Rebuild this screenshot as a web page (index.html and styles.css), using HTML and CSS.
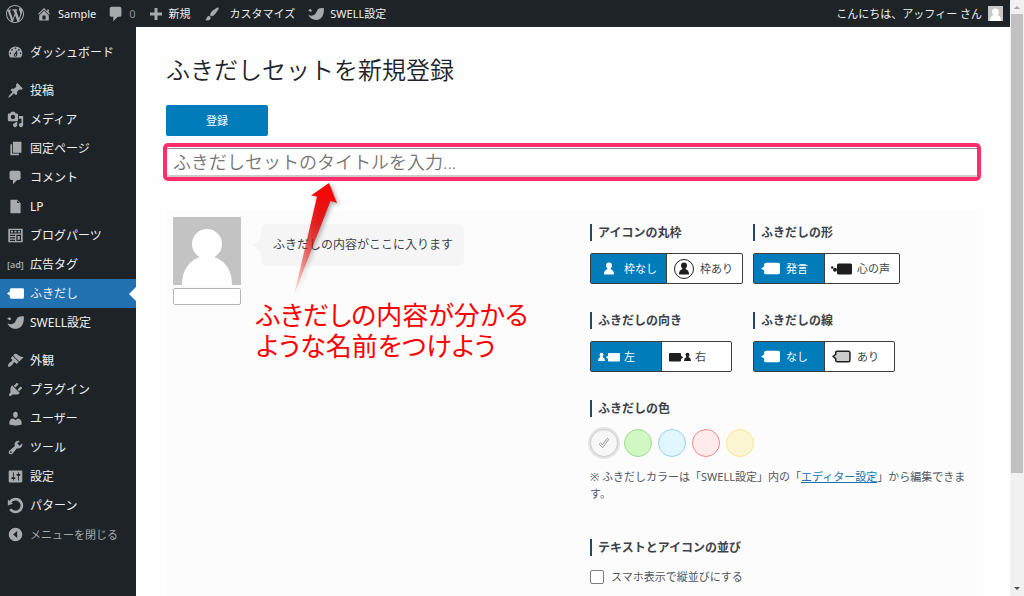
FILE: index.html
```html
<!DOCTYPE html>
<html lang="ja">
<head>
<meta charset="utf-8">
<title>ふきだしセットを新規登録</title>
<link rel="stylesheet" href="styles.css">
</head>
<body>
<svg class="defs" aria-hidden="true">
  <symbol id="i-comment" viewBox="0 0 20 20"><path d="M5 2h9c1.1 0 2 .9 2 2v7c0 1.1-.9 2-2 2h-2l-5 5v-5H5c-1.1 0-2-.9-2-2V4c0-1.1.9-2 2-2z"/></symbol>
  <symbol id="i-bird" viewBox="0 0 20 20"><path d="M0 5.500L2.600 3.800Q4.600 4 4.700 5.800 4.500 7.400 3 7.300 2 6.500 0 5.500zM.6 10.800Q4.800 13.400 8.300 10.700C11 8.500 11 3.500 15 2.800Q17.500 2.500 19.800 2.600C20.300 10 17.800 17.300 10.500 17.400 5.500 17.300 2 14.800.6 10.800z"/></symbol>
  <symbol id="i-user" viewBox="0 0 20 20"><path d="M10 9.250c-2.270 0-2.730-3.440-2.730-3.440C7 4.020 7.820 2 9.970 2c2.160 0 2.980 2.020 2.710 3.810 0 0-.41 3.440-2.680 3.440zm0 2.570L12.720 10c2.390 0 4.520 2.330 4.520 4.530v2.490s-3.650 1.130-7.240 1.130c-3.650 0-7.240-1.130-7.240-1.130v-2.490c0-2.250 1.940-4.480 4.470-4.480z"/></symbol>
  <symbol id="i-person" viewBox="0 0 10 12"><circle cx="5" cy="3" r="3"/><path d="M3.500 5h3l.3 1.700C9 7.400 10 9 10 12H0c0-3 1-4.600 3.200-5.300z"/></symbol>
  <symbol id="i-balloon" viewBox="0 0 18 12"><path d="M5 .5h11.500Q18 .5 18 2v8q0 1.500-1.500 1.500H4.500Q3 11.500 3 10V8L0 6l3-2V2Q3 .5 5 .5z"/></symbol>
  <symbol id="i-think" viewBox="0 0 21 12"><rect x="6" y=".5" width="15" height="11" rx="1.500"/><circle cx="4" cy="6.800" r="2"/><circle cx="1.200" cy="4.500" r="1.200"/></symbol>
  <symbol id="i-outline" viewBox="0 0 18 12"><path d="M5 1h10.500Q17 1 17 2.500v7Q17 11 15.500 11H5Q3.500 11 3.500 9.500V8L1 6l2.500-2V2.500Q3.500 1 5 1z" fill="#ccc" stroke="#1e1e1e" stroke-width="1.400"/></symbol>
  <symbol id="i-left" viewBox="0 0 22 10"><circle cx="3.500" cy="2.700" r="2"/><path d="M2.500 4h2l.3 1.200Q7 6 7 9H0q0-3 2.200-3.800zM11 1h10q1 0 1 1v6.500q0 1-1 1H11q-1 0-1-1V7L7.800 5.300 10 3.700V2q0-1 1-1z"/></symbol>
</svg>

<header class="topbar">
  <a class="tb tb-mark" href="#" aria-label="WordPress"><svg class="ic18" viewBox="0 0 20 20"><path d="M20 10c0-5.510-4.490-10-10-10C4.480 0 0 4.490 0 10c0 5.520 4.480 10 10 10 5.510 0 10-4.480 10-10zM7.780 15.370L4.370 6.220c.55-.02 1.170-.08 1.170-.08.5-.06.44-1.130-.06-1.110 0 0-1.450.11-2.370.11-.18 0-.37 0-.58-.01C4.120 2.690 6.870 1.110 10 1.110c2.330 0 4.450.87 6.050 2.340-.68-.11-1.650.39-1.650 1.580 0 .74.45 1.360.9 2.100.35.61.55 1.360.55 2.460 0 1.490-1.400 5-1.400 5l-3.030-8.370c.54-.02.82-.17.82-.17.5-.05.44-1.250-.06-1.220 0 0-1.440.12-2.380.12-.87 0-2.330-.12-2.330-.12-.5-.03-.56 1.200-.06 1.220l.92.08 1.260 3.410zM17.410 10c.24-.64.74-1.870.43-4.250.7 1.290 1.050 2.710 1.050 4.250 0 3.290-1.730 6.240-4.400 7.780.97-2.590 1.940-5.200 2.920-7.780zM6.100 18.090C3.120 16.650 1.110 13.530 1.110 10c0-1.300.23-2.480.72-3.590C3.250 10.300 4.670 14.200 6.100 18.090zm4.030-6.630l2.580 6.980c-.86.29-1.760.45-2.710.45-.79 0-1.570-.11-2.290-.33.81-2.380 1.620-4.740 2.420-7.100z"/></svg></a>
  <a class="tb" href="#"><svg class="ic16" viewBox="0 0 20 20"><path d="M16 8.500l1.530 1.530-1.060 1.060L10 4.600l-6.470 6.490-1.060-1.060L10 2.500l4 4v-2h2v4zm-6-2.460l6 5.990V18H4v-5.970zM12 17v-5H8v5h4z"/></svg>Sample</a>
  <a class="tb tb-dim" href="#"><svg class="ic18"><use href="#i-comment"/></svg>0</a>
  <a class="tb" href="#"><svg class="ic14" viewBox="0 0 14 14"><path d="M5.500 1h3v4.500H13v3H8.500V13h-3V8.500H1v-3h4.500z"/></svg>新規</a>
  <a class="tb tb-wide" href="#"><svg class="ic16" viewBox="0 0 20 20"><path d="M18.330 3.570s.27-.8-.31-1.360c-.53-.52-1.220-.24-1.220-.24-.61.3-5.760 3.470-7.670 5.570-.86.96-2.060 3.790-1.090 4.820.92.98 3.960-.17 4.790-1 2.060-2.060 5.210-7.170 5.500-7.790zM1.400 17.650c2.370-1.560 1.460-3.410 3.230-4.640.93-.65 2.220-.62 3.080.29.63.67.8 2.570-.16 3.460-1.570 1.450-4 1.550-6.150.89z"/></svg>カスタマイズ</a>
  <a class="tb" href="#"><svg class="ic16"><use href="#i-bird"/></svg>SWELL設定</a>
  <a class="tb account" href="#">こんにちは、アッフィー さん
    <svg class="face" viewBox="0 0 15 15"><path fill="#c7c7c7" d="M0 0h15v15H0z"/><circle cx="7.500" cy="6" r="3.400" fill="#fff"/><path fill="#fff" d="M2 15q0-5.500 4-6h3q4 .5 4 6z"/></svg>
  </a>
</header>

<nav class="sidebar" aria-label="メインメニュー">
  <ul>
    <li><a href="#"><svg viewBox="0 0 20 20"><path d="M3.760 16h12.480c1.100-1.370 1.760-3.110 1.760-5 0-4.420-3.580-8-8-8s-8 3.580-8 8c0 1.890.66 3.630 1.760 5zM10 4c.55 0 1 .45 1 1s-.45 1-1 1-1-.45-1-1 .45-1 1-1zM6 6c.55 0 1 .45 1 1s-.45 1-1 1-1-.45-1-1 .45-1 1-1zm8 0c.55 0 1 .45 1 1s-.45 1-1 1-1-.45-1-1 .45-1 1-1zm-5.370 5.550L12 7v6c0 1.100-.9 2-2 2s-2-.9-2-2c0-.57.24-1.080.63-1.450zM4 10c.55 0 1 .45 1 1s-.45 1-1 1-1-.45-1-1 .45-1 1-1zm12 0c.55 0 1 .45 1 1s-.45 1-1 1-1-.45-1-1 .45-1 1-1zm-5 3c0-.55-.45-1-1-1s-1 .45-1 1 .45 1 1 1 1-.45 1-1z"/></svg>ダッシュボード</a></li>
  </ul>
  <ul>
    <li><a href="#"><svg viewBox="0 0 20 20"><path d="M10.440 3.020l1.820-1.820 6.360 6.350-1.830 1.820c-1.050-.68-2.480-.57-3.410.36l-.75.75c-.92.93-1.040 2.350-.35 3.410l-1.830 1.820-2.410-2.410-2.800 2.790c-.42.42-3.380 2.710-3.800 2.290s1.860-3.390 2.280-3.810l2.790-2.790L4.100 9.360l1.830-1.820c1.050.69 2.480.57 3.400-.36l.75-.75c.93-.92 1.050-2.350.36-3.410z"/></svg>投稿</a></li>
    <li><a href="#"><svg viewBox="0 0 20 20"><path d="M13 11V4c0-.55-.45-1-1-1h-1.670L9 1H5L3.670 3H2c-.55 0-1 .45-1 1v7c0 .55.45 1 1 1h10c.55 0 1-.45 1-1zM7 4.500c1.380 0 2.500 1.120 2.500 2.500S8.380 9.500 7 9.500 4.500 8.380 4.500 7 5.620 4.500 7 4.500zM14 6h5v10.500c0 1.380-1.120 2.500-2.500 2.500S14 17.880 14 16.500s1.120-2.500 2.500-2.500c.17 0 .34.02.5.05V9h-3V6zm-4 8.050V13h2v3.500c0 1.380-1.120 2.500-2.500 2.500S7 17.880 7 16.500 8.120 14 9.500 14c.17 0 .34.02.5.05z"/></svg>メディア</a></li>
    <li><a href="#"><svg viewBox="0 0 20 20"><path d="M7 15V2h10v13H7zm-1 1h8v2H4V5h2v11z"/></svg>固定ページ</a></li>
    <li><a href="#"><svg><use href="#i-comment"/></svg>コメント</a></li>
    <li><a href="#"><svg viewBox="0 0 20 20"><path d="M12 2l4 4v12H4V2h8zm0 4h3l-3-3v3z"/></svg>LP</a></li>
    <li><a href="#"><svg viewBox="0 0 20 20"><path fill-rule="evenodd" d="M1.500 2h17v16h-17zM3.500 3.500v4h13v-4zM3.500 9v1.500h6V9zm7.500 0v7.500h5.500V9zm-7.500 3v1.500h6V12zm0 3v1.500h6V15zm9-4.500H15V15h-2.500zM4.500 4.500h2.500v2H4.500zm4.200 0h2.500v2H8.700zm4.300 0h2.500v2H13z"/></svg>ブログパーツ</a></li>
    <li><a href="#"><span class="ad" aria-hidden="true">[ad]</span>広告タグ</a></li>
    <li><a class="current" href="#" aria-current="page"><svg><use href="#i-balloon"/></svg>ふきだし</a></li>
    <li><a href="#"><svg><use href="#i-bird"/></svg>SWELL設定</a></li>
  </ul>
  <ul>
    <li><a href="#"><svg viewBox="0 0 20 20"><path d="M14.480 11.060L7.410 3.990l1.500-1.500c.5-.56 2.300-.47 3.510.32 1.210.8 1.430 1.280 2.910 2.100 1.180.64 2.450 1.260 4.450.85zm-.71.71L6.700 4.700 4.930 6.470c-.39.39-.39 1.020 0 1.410l1.060 1.060c.39.39.39 1.030 0 1.420-.6.6-1.430 1.110-2.210 1.690-.35.26-.7.53-1.010.84C1.430 14.230.4 16.080 1.400 17.070c.99 1 2.840-.03 4.180-1.360.31-.31.58-.66.85-1.020.57-.78 1.080-1.610 1.690-2.210.39-.39 1.020-.39 1.410 0l1.060 1.060c.39.39 1.020.39 1.410 0z"/></svg>外観</a></li>
    <li><a href="#"><svg viewBox="0 0 20 20"><path d="M13.110 4.360L9.870 7.600 8 5.730l3.240-3.240c.35-.34 1.050-.2 1.560.32.52.51.66 1.210.31 1.550zm-8 1.770l.91-1.120 9.010 9.010-1.190.84c-.71.71-2.630 1.160-3.820 1.160H6.140L4.900 17.260c-.59.59-1.540.59-2.120 0-.59-.58-.59-1.530 0-2.120l1.240-1.240v-3.880c0-1.130.4-3.190 1.090-3.890zm7.260 3.970l3.240-3.240c.34-.35 1.040-.21 1.550.31.52.51.66 1.210.31 1.550l-3.240 3.250z"/></svg>プラグイン</a></li>
    <li><a href="#"><svg><use href="#i-user"/></svg>ユーザー</a></li>
    <li><a href="#"><svg viewBox="0 0 20 20"><path d="M16.680 9.770c-1.340 1.340-3.300 1.670-4.950.99l-5.410 6.520c-.99.99-2.590.99-3.580 0s-.99-2.590 0-3.570l6.520-5.420c-.68-1.650-.35-3.610.99-4.950 1.280-1.280 3.120-1.620 4.720-1.060l-2.890 2.890 2.820 2.820 2.860-2.870c.53 1.580.18 3.390-1.080 4.650zM3.810 16.210c.4.39 1.040.39 1.430 0 .4-.4.4-1.040 0-1.430-.39-.4-1.030-.4-1.430 0-.39.39-.39 1.030 0 1.430z"/></svg>ツール</a></li>
    <li><a href="#"><svg viewBox="0 0 20 20"><path d="M18 16V4c0-.55-.45-1-1-1H3c-.55 0-1 .45-1 1v12c0 .55.45 1 1 1h14c.55 0 1-.45 1-1zM8 11h1c.55 0 1 .45 1 1s-.45 1-1 1H8v1.500c0 .28-.22.5-.5.5s-.5-.22-.5-.5V13H6c-.55 0-1-.45-1-1s.45-1 1-1h1V5.500c0-.28.22-.5.5-.5s.5.22.5.5V11zm5-2h-1c-.55 0-1-.45-1-1s.45-1 1-1h1V5.500c0-.28.22-.5.5-.5s.5.22.5.5V7h1c.55 0 1 .45 1 1s-.45 1-1 1h-1v5.500c0 .28-.22.5-.5.5s-.5-.22-.5-.5V9z"/></svg>設定</a></li>
    <li><a href="#"><svg viewBox="0 0 20 20"><path d="M10.250 1.020c5.100 0 8.750 4.040 8.750 9s-3.650 9-8.750 9c-3.200 0-6.020-1.590-7.680-3.990l2.590-1.520c1.100 1.500 2.860 2.510 4.840 2.510 3.300 0 6-2.790 6-6s-2.700-6-6-6c-1.970 0-3.720 1-4.820 2.490L7 8.020l-6 2v-7L2.890 4.600c1.690-2.170 4.360-3.580 7.360-3.580z"/></svg>パターン</a></li>
    <li><button class="collapse" type="button"><svg viewBox="0 0 20 20"><path fill-rule="evenodd" d="M10 2a8 8 0 1 0 0 16 8 8 0 0 0 0-16zm2 3.800v8.400L7.200 10z"/></svg>メニューを閉じる</button></li>
  </ul>
</nav>

<main class="main">
  <h1>ふきだしセットを新規登録</h1>
  <button class="submit" type="button">登録</button>
  <div class="title-frame"><input class="title-input" type="text" aria-label="ふきだしセットのタイトル" placeholder="ふきだしセットのタイトルを入力..."></div>

  <section class="panel">
    <div class="preview">
      <div class="person">
        <svg class="avatar" viewBox="0 0 68 68" role="img" aria-label="アイコン画像"><path fill="#c3c3c3" d="M0 0h68v68H0z"/><circle cx="34" cy="27" r="15" fill="#fff"/><path fill="#fff" d="M9 68C9 52 17 43 27 40h14c10 3 18 12 18 28z"/></svg>
        <input class="name" type="text" aria-label="名前">
      </div>
      <p class="bubble">ふきだしの内容がここに入ります</p>
    </div>

    <div class="settings">
      <fieldset>
        <legend>アイコンの丸枠</legend>
        <div class="toggle">
          <label><input type="radio" name="frame" checked><svg class="p-person"><use href="#i-person"/></svg>枠なし</label>
          <label><input type="radio" name="frame"><span class="ring"><svg class="p-person"><use href="#i-person"/></svg></span>枠あり</label>
        </div>
      </fieldset>
      <fieldset>
        <legend>ふきだしの形</legend>
        <div class="toggle">
          <label><input type="radio" name="shape" checked><svg class="p-balloon"><use href="#i-balloon"/></svg>発言</label>
          <label><input type="radio" name="shape"><svg class="p-think"><use href="#i-think"/></svg>心の声</label>
        </div>
      </fieldset>
      <fieldset>
        <legend>ふきだしの向き</legend>
        <div class="toggle tight">
          <label><input type="radio" name="dir" checked><svg class="p-dir"><use href="#i-left"/></svg>左</label>
          <label><input type="radio" name="dir"><svg class="p-dir" viewBox="0 0 22 10"><g transform="matrix(-1 0 0 1 22 0)"><use href="#i-left" width="22" height="10"/></g></svg>右</label>
        </div>
      </fieldset>
      <fieldset>
        <legend>ふきだしの線</legend>
        <div class="toggle">
          <label><input type="radio" name="line" checked><svg class="p-balloon"><use href="#i-balloon"/></svg>なし</label>
          <label><input type="radio" name="line"><svg class="p-balloon"><use href="#i-outline"/></svg>あり</label>
        </div>
      </fieldset>
      <fieldset class="full">
        <legend>ふきだしの色</legend>
        <div class="colors">
          <label class="dot gray"><input type="radio" name="color" aria-label="グレー" checked><svg viewBox="0 0 12 12"><path d="M1.200 7.200l1.500-1.300 1.700 1.900 4.900-6.500 1.400 1.100-6 8.300z" fill="#eee" stroke="#888" stroke-width=".8"/></svg></label>
          <label class="dot green"><input type="radio" name="color" aria-label="緑"></label>
          <label class="dot blue"><input type="radio" name="color" aria-label="青"></label>
          <label class="dot red"><input type="radio" name="color" aria-label="赤"></label>
          <label class="dot yellow"><input type="radio" name="color" aria-label="黄"></label>
        </div>
        <p class="note">※ ふきだしカラーは「SWELL設定」内の「<a href="#">エディター設定</a>」から編集できます。</p>
      </fieldset>
      <fieldset class="full">
        <legend>テキストとアイコンの並び</legend>
        <label class="check"><input type="checkbox">スマホ表示で縦並びにする</label>
      </fieldset>
    </div>
  </section>

  <svg class="arrow" viewBox="0 0 50 118" aria-hidden="true">
    <defs><linearGradient id="fade" x1="0" y1="1" x2="0" y2="0"><stop offset="0" stop-color="#f00" stop-opacity=".1"/><stop offset=".65" stop-color="#e60000" stop-opacity=".85"/><stop offset="1" stop-color="#f00"/></linearGradient></defs>
    <path fill="url(#fade)" d="M37 2L19 14.500l6 1L2 114 38.500 20l6.500 2z"/>
  </svg>
  <p class="callout">ふきだしの内容が分かる<br>ような名前をつけよう</p>
</main>

<div class="scroll" aria-hidden="true"><span class="up"></span><span class="thumb"></span><span class="down"></span></div>
</body>
</html>
```
FILE: styles.css
```css
* { box-sizing: border-box; }

body {
  margin: 0;
  min-height: 100vh;
  display: grid;
  grid-template-columns: 136px 1fr 14px;
  grid-template-rows: 27px 1fr;
  background: #fefefe;
  color: #3c434a;
  font: 12px/17px "Noto Sans", "Noto Sans CJK JP", sans-serif;
}

h1, p, ul, fieldset { margin: 0; padding: 0; }
ul { list-style: none; }
fieldset { border: 0; min-width: 0; }
button, input { font: inherit; }
svg { flex: none; fill: currentColor; }
.defs { position: absolute; width: 0; height: 0; }

.topbar {
  grid-column: 1 / 3;
  display: flex;
  align-items: center;
  gap: 13px;
  padding: 0 7px 0 6px;
  background: #1d2327;
  font-size: 11px;
}
.tb {
  display: flex;
  align-items: center;
  gap: 6px;
  color: #f0f0f1;
  text-decoration: none;
  white-space: nowrap;
}
.tb svg { color: #a7aaad; }
.tb-mark { margin-right: -1px; }
.tb-dim { gap: 4px; margin-left: -2px; color: #8c9196; }
.tb-wide { gap: 10px; }
.account { margin-left: auto; }
.ic14 { width: 14px; height: 14px; }
.ic16 { width: 16px; height: 16px; }
.ic18 { width: 18px; height: 18px; }
.face { width: 15px; height: 15px; }

.sidebar {
  grid-column: 1;
  grid-row: 2;
  display: flex;
  flex-direction: column;
  gap: 9px;
  padding-top: 11px;
  background: #1d2327;
}
.sidebar a, .collapse {
  display: flex;
  align-items: center;
  gap: 6px;
  width: 100%;
  height: 29px;
  padding: 0 0 0 7px;
  border: 0;
  background: none;
  color: #f0f0f1;
  text-decoration: none;
  white-space: nowrap;
}
.sidebar svg { width: 17px; height: 17px; color: #a7aaad; }
.sidebar .collapse { color: #a7aaad; font-size: 11px; }
.ad { width: 17px; color: #a7aaad; font-size: 9px; font-weight: 600; }
.sidebar .current { position: relative; background: #2271b1; }
.sidebar .current svg { color: #fff; }
.current::after {
  content: "";
  position: absolute;
  right: 0;
  border: 7px solid transparent;
  border-left: 0;
  border-right-color: #fefefe;
}

.main {
  grid-column: 2;
  grid-row: 2;
  position: relative;
  display: flex;
  flex-direction: column;
  padding: 26px 30px 0;
}
h1 { color: #1d2327; font-size: 24px; font-weight: 350; line-height: 34px; }
.submit {
  width: 102px;
  height: 31px;
  margin: 18px 0 7px;
  padding: 0;
  border: 0;
  border-radius: 2px;
  background: #007cba;
  color: #fff;
  font-size: 11px;
}
.title-frame {
  margin: 0 -1px 0 -3px;
  padding: 1px 0 0;
  border: 4px solid #ff2d6b;
  border-radius: 5px;
}
.title-input {
  display: block;
  width: 100%;
  height: 29px;
  padding: 0 6px;
  border: 0;
  border-top: 1px solid #8c8f94;
  border-bottom: 2px solid #ccc;
  background: #fff;
  font-size: 18px;
  font-weight: 350;
}
.title-input::placeholder { color: #757575; opacity: 1; }

.panel {
  flex: 1;
  display: grid;
  grid-template-columns: 1fr 382px;
  gap: 35px;
  align-items: start;
  margin-top: 29px;
  padding: 6px 8px 0 7px;
  background: #fcfcfc;
}
.preview { display: flex; align-items: start; gap: 20px; padding-top: 1px; }
.person { display: grid; gap: 3px; width: 68px; }
.avatar { width: 68px; height: 68px; }
.name { width: 100%; height: 17px; padding: 0 4px; border: 1px solid #b5b5b5; border-radius: 2px; background: #fff; }
.bubble {
  position: relative;
  margin-top: 7px;
  padding: 12px 11px 12px 12px;
  border-radius: 6px;
  background: #f5f5f5;
  line-height: 18px;
}
.bubble::before {
  content: "";
  position: absolute;
  left: -8px;
  top: 14px;
  border: 7px solid transparent;
  border-left: 0;
  border-right: 8px solid #f5f5f5;
}

.settings {
  display: grid;
  grid-template-columns: 163px 1fr;
  row-gap: 28px;
  padding-top: 8px;
}
.full { grid-column: 1 / -1; }
.full + .full { margin-top: 9px; }
legend {
  margin-bottom: 12px;
  padding: 0 0 0 6px;
  border-left: 2px solid #1d4b66;
  font-weight: 700;
  line-height: 17px;
}
.toggle {
  display: inline-flex;
  height: 31px;
  border: 1px solid #3c3c3c;
  border-radius: 2px;
  background: #fff;
  vertical-align: top;
  font-size: 11px;
}
.toggle label {
  display: flex;
  align-items: center;
  gap: 6px;
  min-width: 70px;
  padding: 0 9px 0 7px;
}
.toggle label + label { border-left: 1px solid #3c3c3c; }
.toggle.tight label { gap: 4px; }
.toggle input, .dot input { position: absolute; opacity: 0; margin: 0; }
.toggle svg { color: #1e1e1e; }
.toggle label:has(:checked) { background: #007cba; color: #fff; }
.toggle label:has(:checked) svg { color: #fff; }
.p-person { width: 10px; height: 13px; }
label > .p-person { margin: 0 4px 0 6px; }
.ring { display: grid; place-items: center; width: 20px; height: 20px; border: 1px solid #1e1e1e; border-radius: 50%; }
.p-balloon { width: 19px; height: 13px; }
.p-think { width: 21px; height: 12px; }
.toggle label:has(.p-think) { gap: 5px; padding: 0 9px 0 6px; }
.p-dir { width: 22px; height: 10px; }

.colors { display: flex; gap: 6px; }
.dot { display: grid; place-items: center; width: 28px; height: 28px; border: 1px solid; border-radius: 50%; }
.dot svg { width: 12px; height: 12px; }
.gray { background: #f7f7f7; border-color: #ccc; box-shadow: 0 0 0 2px #e4e4e4; }
.green { background: #d1f8c2; border-color: #9ddd93; }
.blue { background: #e2f6ff; border-color: #93d2f0; }
.red { background: #ffebeb; border-color: #f48789; }
.yellow { background: #fbf6d2; border-color: #fbe593; }
.note { margin-top: 11px; font-size: 11px; color: #50575e; }
.note a { color: #2271b1; }
.check { display: flex; align-items: center; gap: 7px; font-size: 11px; color: #50575e; }
.check input { appearance: none; width: 14px; height: 14px; margin: 0; border: 1px solid #7a7d82; border-radius: 2px; background: #fff; }

.arrow {
  position: absolute;
  left: 156px;
  top: 154px;
  width: 50px;
  height: 118px;
  filter: drop-shadow(2px 2px 2px rgba(0, 0, 0, .35));
}
.callout {
  position: absolute;
  left: 120px;
  top: 273px;
  color: #f00;
  font-size: 26px;
  font-weight: 400;
  line-height: 31px;
  font-feature-settings: "palt";
  white-space: nowrap;
}

.scroll {
  grid-column: 3;
  grid-row: 1 / 3;
  display: flex;
  flex-direction: column;
  align-items: center;
  background: #f1f1f1;
}
.up, .down { border: 3px solid transparent; }
.up { margin: 3px 0 5px; border-bottom-color: #a3a3a3; }
.down { margin: auto 0 3px; border-top-color: #505050; }
.thumb { width: 12px; height: 459px; background: #c1c1c1; }
```
